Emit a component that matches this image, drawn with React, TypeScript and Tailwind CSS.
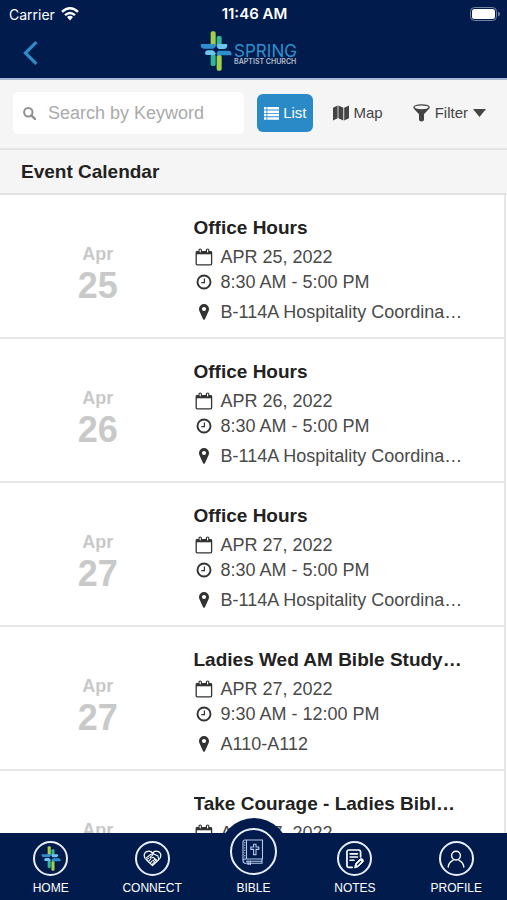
import { useState } from "react";

type EventItem = {
  id: string;
  month: string;
  day: string;
  title: string;
  date: string;
  time: string;
  place: string;
};

const EVENTS: EventItem[] = [
  { id: "e1", month: "Apr", day: "25", title: "Office Hours", date: "APR 25, 2022", time: "8:30 AM - 5:00 PM", place: "B-114A Hospitality Coordina…" },
  { id: "e2", month: "Apr", day: "26", title: "Office Hours", date: "APR 26, 2022", time: "8:30 AM - 5:00 PM", place: "B-114A Hospitality Coordina…" },
  { id: "e3", month: "Apr", day: "27", title: "Office Hours", date: "APR 27, 2022", time: "8:30 AM - 5:00 PM", place: "B-114A Hospitality Coordina…" },
  { id: "e4", month: "Apr", day: "27", title: "Ladies Wed AM Bible Study…", date: "APR 27, 2022", time: "9:30 AM - 12:00 PM", place: "A110-A112" },
  { id: "e5", month: "Apr", day: "27", title: "Take Courage - Ladies Bibl…", date: "APR 27, 2022", time: "9:30 AM - 12:00 PM", place: "A110-A112" },
];

function CrossMark({ className }: { className: string }) {
  return (
    <svg viewBox="0 0 94 120" className={className} aria-hidden>
      <rect x="31" y="1" width="15" height="46" rx="5" fill="#a3d04a" />
      <rect x="49" y="15" width="15" height="32" rx="5" fill="#35b597" />
      <rect x="31" y="70" width="15" height="35" rx="5" fill="#35b597" />
      <rect x="49" y="72" width="15" height="47" rx="5" fill="#a3d04a" />
      <path d="M4 39H42Q46 39 46 44V53H10Q2 53 1 43Q1 39 4 39Z" fill="#2f8fcd" />
      <path d="M53 39H78Q82 39 81 45Q79 54 71 54H49V44Q49 39 53 39Z" fill="#6cc5ef" />
      <path d="M23 58H46V67Q46 72 41 72H20Q14 72 14 66Q15 58 23 58Z" fill="#6cc5ef" />
      <path d="M49 59H84Q93 59 94 69Q94 73 90 73H53Q49 73 49 68Z" fill="#2f8fcd" />
      <path d="M47 46L57 56L47 67L37 56Z" fill="#011c4c" />
    </svg>
  );
}

function WifiIcon() {
  return (
    <svg viewBox="0 0 18 14" className="h-[14px] w-[18px]" fill="none" stroke="#fff" strokeWidth="2.4" aria-hidden>
      <path d="M1 4.8Q9-2.3 17 4.8" />
      <path d="M4 8.2Q9 3.8 14 8.2" />
      <path d="M6 10.1Q9 7.6 12 10.1L9 13.4Z" fill="#fff" stroke="none" />
    </svg>
  );
}

function BatteryIcon() {
  return (
    <svg viewBox="0 0 30 14" className="h-[14px] w-[30px]" aria-hidden>
      <rect x=".5" y=".5" width="26" height="13" rx="4" fill="none" stroke="#7484a3" />
      <rect x="2" y="2" width="23" height="10" rx="2.5" fill="#fff" />
      <path d="M28 4.6Q30 5.4 30 7T28 9.4Z" fill="#7484a3" />
    </svg>
  );
}

function SearchIcon() {
  return (
    <svg viewBox="0 0 13 13" className="h-[13px] w-[13px] shrink-0" fill="none" stroke="#8f8f8f" strokeWidth="2" aria-hidden>
      <circle cx="5.3" cy="5.3" r="4.2" />
      <path d="M8.4 8.4L12 12" strokeWidth="2.4" strokeLinecap="round" />
    </svg>
  );
}

function ListIcon() {
  return (
    <svg viewBox="0 0 15 13" className="h-[13px] w-[15px]" fill="currentColor" aria-hidden>
      <path d="M0 0H2.5V2.5H0ZM3.3 0H15V2.5H3.3ZM0 3.4H2.5V5.9H0ZM3.3 3.4H15V5.9H3.3ZM0 6.8H2.5V9.3H0ZM3.3 6.8H15V9.3H3.3ZM0 10.2H2.5V12.7H0ZM3.3 10.2H15V12.7H3.3Z" />
    </svg>
  );
}

function MapIcon() {
  return (
    <svg viewBox="0 0 16 16" className="h-4 w-4" fill="currentColor" aria-hidden>
      <path d="M0 2.7L4.6.4V13.3L0 15.6ZM5.4.4L10.3 2.7V15.6L5.4 13.3ZM11.2 2.7L16 .4V13.3L11.2 15.6Z" />
    </svg>
  );
}

function FunnelIcon() {
  return (
    <svg viewBox="0 0 17 18" className="h-[18px] w-[17px]" aria-hidden>
      <path d="M.4 3.2Q.8 5 6 10.2V16.2Q8.5 18.6 11 16.2V10.2Q16.2 5 16.6 3.2Z" fill="currentColor" />
      <ellipse cx="8.5" cy="3.3" rx="7.6" ry="2.5" fill="#f5f5f5" stroke="currentColor" strokeWidth="1.3" />
    </svg>
  );
}

function CalendarIcon() {
  return (
    <svg viewBox="0 0 18 18" className="h-[18px] w-[18px]" fill="none" stroke="currentColor" aria-hidden>
      <rect x="1.2" y="3.6" width="15.4" height="13.2" rx="1" strokeWidth="1.3" />
      <path d="M1.2 3.4H16.6V6.3H1.2Z" fill="currentColor" stroke="none" />
      <rect x="4" y="1" width="2.4" height="4" rx="1.2" fill="#fff" strokeWidth="1.2" />
      <rect x="11.4" y="1" width="2.4" height="4" rx="1.2" fill="#fff" strokeWidth="1.2" />
    </svg>
  );
}

function ClockIcon() {
  return (
    <svg viewBox="0 0 16 16" className="h-4 w-4" fill="none" stroke="currentColor" aria-hidden>
      <circle cx="8" cy="8" r="6.5" strokeWidth="1.9" />
      <path d="M8.4 4.5V8.7H5.2" strokeWidth="1.2" />
    </svg>
  );
}

function PinIcon() {
  return (
    <svg viewBox="0 0 10 16" className="h-4 w-[10px]" fill="currentColor" aria-hidden>
      <path fillRule="evenodd" d="M5 0A5 5 0 0 1 10 5Q10 6.4 9.3 7.8L5.9 15.2Q5 16.4 4.1 15.2L.7 7.8Q0 6.4 0 5A5 5 0 0 1 5 0ZM5 2.9A2.1 2.1 0 1 0 5 7.1A2.1 2.1 0 1 0 5 2.9Z" />
    </svg>
  );
}

function HandshakeHeartIcon() {
  return (
    <svg viewBox="0 0 20 18" className="h-[17px] w-[19px]" fill="none" stroke="currentColor" strokeLinecap="round" strokeLinejoin="round" aria-hidden>
      <path d="M10 3.4C8-.1 1.2.6 1.2 6C1.2 8.2 2.6 9.6 4 10.8L10 16.4L16 10.8C17.4 9.6 18.8 8.2 18.8 6C18.8.6 12 -.1 10 3.4Z" strokeWidth="1.3" />
      <path d="M3.4 8.4L8 4.8L10.4 3.8L15.8 6.4L16.4 9.6M10.6 5L7.4 7.8Q8.6 9.4 10.6 7.6L14.8 11M4.4 9.8L6 8.6M6.2 11.6L8 9.8M8 13.4L9.8 11.4M10 15L11.4 13.2M12.6 13.2L10.8 10.8M14 12L11.8 9.6" strokeWidth="1.1" />
    </svg>
  );
}

function BibleIcon() {
  return (
    <svg viewBox="0 0 22 26" className="h-[26px] w-[22px]" fill="none" stroke="#b9c8e6" strokeWidth="1.1" aria-hidden>
      <path d="M4.5 1H20.5V20H4.5M20 20V24.2H3Q1 24 1 21.5V3Q1 1 3 1H4.5V20H3Q1 20.3 1 22" />
      <path d="M2.8 3V19" strokeDasharray="1.2 1.4" />
      <path d="M4 22.2H20M6 21.5V25.5L7.2 24.6L8.4 25.5V21.5" />
      <path d="M11.6 5.2H14V8H16.8V10.4H14V15.6H11.6V10.4H8.8V8H11.6Z" />
    </svg>
  );
}

function NotesIcon() {
  return (
    <svg viewBox="0 0 19 21" className="h-[20px] w-[18px]" fill="none" stroke="currentColor" strokeWidth="1.8" strokeLinecap="round" strokeLinejoin="round" aria-hidden>
      <path d="M6.5 19.4H3.2Q1 19.4 1 17.2V3.2Q1 1 3.2 1H13.2Q15.4 1 15.4 3.2V8.4" />
      <path d="M4.4 5H12M4.4 8.4H12M4.4 11.8H8.4" />
      <path d="M9.2 19.6L10.2 15.2L14.8 10.6Q16.4 9.4 17.8 10.8Q19 12.4 17.8 13.8L13 18.4Z" fill="#fff" strokeWidth="1" />
      <path d="M12 16.6L15.6 13" stroke="#011c4c" strokeWidth="1.3" />
    </svg>
  );
}

function ProfileIcon() {
  return (
    <svg viewBox="0 0 18 18" className="h-[18px] w-[18px]" fill="none" stroke="currentColor" strokeWidth="1.4" strokeLinecap="round" aria-hidden>
      <circle cx="9" cy="5.6" r="4.4" />
      <path d="M1.2 17Q1.6 12.4 6 10.4M12 10.4Q16.4 12.4 16.8 17" />
    </svg>
  );
}

const TABS = [
  { label: "HOME", icon: <CrossMark className="h-[25px] w-[20px]" /> },
  { label: "CONNECT", icon: <HandshakeHeartIcon /> },
  { label: "BIBLE", icon: <BibleIcon />, raised: true },
  { label: "NOTES", icon: <NotesIcon /> },
  { label: "PROFILE", icon: <ProfileIcon /> },
];

function EventRow({ event }: { event: EventItem }) {
  return (
    <li className="grid grid-cols-[38%_1fr] border-b-2 border-[#e6e6e6] pt-[20px] pb-[11px]">
      <div className="pt-[27px] pl-1 text-center font-bold text-[#c9c9c9]">
        <p className="text-[18px] leading-6">{event.month}</p>
        <p className="text-[36px] leading-10">{event.day}</p>
      </div>
      <div className="min-w-0 pr-3 pl-[2px] text-[18px] text-[#4a4a4a]">
        <h2 className="truncate text-[19px] leading-[25px] font-bold text-[#222]">{event.title}</h2>
        <p className="mt-1 flex items-center gap-[6px] leading-[26px]">
          <span className="flex w-[21px] justify-center text-[#333]"><CalendarIcon /></span>
          {event.date}
        </p>
        <p className="flex items-center gap-[6px] leading-6">
          <span className="flex w-[21px] justify-center text-[#333]"><ClockIcon /></span>
          {event.time}
        </p>
        <p className="mt-1 flex items-center gap-[6px] leading-7">
          <span className="flex w-[21px] justify-center text-[#333]"><PinIcon /></span>
          {event.place}
        </p>
      </div>
    </li>
  );
}

export default function App() {
  const [query, setQuery] = useState("");

  return (
    <div className="flex h-screen flex-col bg-white font-['Liberation_Sans',Arial,sans-serif]">
      {/* Status bar and logo */}
      <header className="border-b-2 border-[#a9b6cf] bg-[#011c4c] text-white">
        <div className="grid h-7 grid-cols-3 items-center pr-[7px] pl-[9px] font-['Inter',sans-serif] text-[14px]">
          <span className="flex items-center gap-[6px]">Carrier <WifiIcon /></span>
          <span className="text-center text-[15px] font-semibold">11:46 AM</span>
          <span className="flex justify-end"><BatteryIcon /></span>
        </div>
        <div className="grid h-[50px] grid-cols-[1fr_auto_1fr] items-center pr-[10px] pb-1">
          <button type="button" aria-label="Back" className="pt-1 pl-[23px] text-[#2f8bc8]">
            <svg viewBox="0 0 15 24" className="h-6 w-[15px]" fill="none" stroke="currentColor" strokeWidth="3.2" aria-hidden>
              <path d="M13.4 1.2L2.4 12L13.4 22.8" />
            </svg>
          </button>
          <div className="flex items-center gap-[2px]">
            <CrossMark className="h-10 w-8" />
            <div className="pt-2 font-['Inter',sans-serif]">
              <p className="text-[17px] leading-[13px] text-[#2f8fcd]">SPRING</p>
              <p className="text-[7px] leading-2 font-semibold text-[#b5bccb]">BAPTIST CHURCH</p>
            </div>
          </div>
        </div>
      </header>

      {/* Search and view switch */}
      <div className="flex h-[70px] shrink-0 items-center border-b-2 border-[#e4e4e4] bg-[#f5f5f5] pr-[21px] pb-[2px] pl-[13px] text-[15px] text-[#444]">
        <label className="flex h-[42px] min-w-0 flex-1 items-center gap-3 rounded-[5px] bg-white pl-[10px]">
          <SearchIcon />
          <input
            type="text"
            aria-label="Search by Keyword"
            placeholder="Search by Keyword"
            value={query}
            onChange={(e) => setQuery(e.target.value)}
            className="w-full min-w-0 bg-transparent text-[18px] outline-none placeholder:text-[#aaa]"
          />
        </label>
        <button type="button" className="ml-[13px] flex h-[38px] items-center gap-1 rounded-[6px] bg-[#2a8ac7] px-[7px] text-white">
          <ListIcon />
          List
        </button>
        <button type="button" className="ml-5 flex items-center gap-1">
          <MapIcon />
          Map
        </button>
        <button type="button" className="ml-[30px] flex items-center gap-[5px]">
          <FunnelIcon />
          Filter
          <svg viewBox="0 0 13 8" className="h-2 w-[13px]" fill="currentColor" aria-hidden>
            <path d="M0 0H13L6.5 8Z" />
          </svg>
        </button>
      </div>

      <h1 className="h-[45px] shrink-0 border-b-2 border-[#e4e4e4] bg-[#f5f5f5] pl-[21px] text-[19px] leading-[44px] font-bold text-[#222]">
        Event Calendar
      </h1>

      {/* Event list */}
      <main className="min-h-0 flex-1 overflow-y-auto [scrollbar-width:none]">
        <ul className="mr-px border-r-2 border-[#e6e6e6]">
          {EVENTS.map((event) => (
            <EventRow key={event.id} event={event} />
          ))}
        </ul>
      </main>

      {/* Tab bar */}
      <nav className="relative grid h-[67px] shrink-0 grid-cols-5 grid-rows-[minmax(0,1fr)] bg-[#011c4c] text-[12px] text-white">
        <div className="absolute -top-[15px] left-1/2 h-[70px] w-[70px] -translate-x-1/2 rounded-full bg-[#011c4c]" />
        {TABS.map((tab) => (
          <a key={tab.label} href="#" className="relative flex flex-col items-center justify-end pb-1">
            <span
              className={`flex shrink-0 items-center justify-center rounded-full border-2 border-[#e8eefb] ${
                tab.raised ? "mb-[5px] h-[47px] w-[47px]" : "mb-1 h-[35px] w-[35px]"
              }`}
            >
              {tab.icon}
            </span>
            <span className="leading-4">{tab.label}</span>
          </a>
        ))}
      </nav>
    </div>
  );
}
